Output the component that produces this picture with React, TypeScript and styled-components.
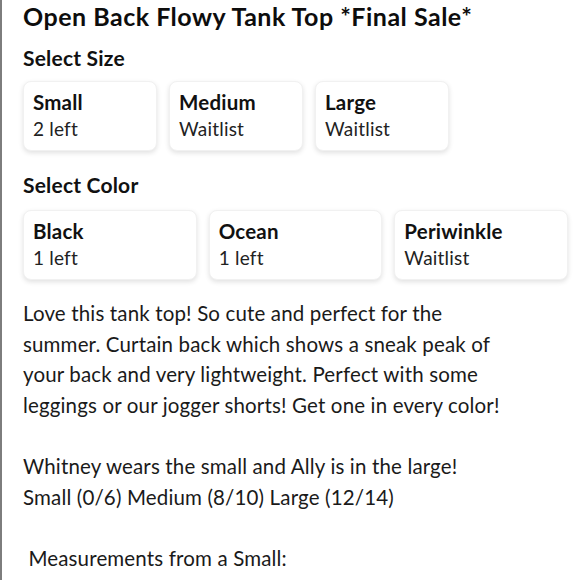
import React from "react";
import styled, { createGlobalStyle } from "styled-components";

const Global = createGlobalStyle`
  html, body { margin: 0; padding: 0; background: #ffffff; }
  body { font-family: Lato, "Open Sans", sans-serif; color: #111; }
`;

const Page = styled.div`
  box-sizing: border-box;
  min-height: 580px;
  border-left: 2px solid #7d7d7d;
  padding: 1px 12px 0 21px;
  overflow: hidden;
`;

const Title = styled.h1`
  margin: 0;
  font-size: 25px;
  line-height: 30px;
  font-weight: 700;
  color: #0d0d0d;
  letter-spacing: 0.5px;
`;

const SectionTitle = styled.h2<{ $gap: number }>`
  margin: ${(p) => p.$gap}px 0 0;
  font-size: 21px;
  line-height: 26px;
  font-weight: 700;
  color: #111;
  letter-spacing: 0.2px;
`;

const Options = styled.div<{ $top: number }>`
  display: flex;
  gap: 12px;
  margin-top: ${(p) => p.$top}px;
`;

const OptionCard = styled.div<{ $w: number }>`
  box-sizing: border-box;
  width: ${(p) => p.$w}px;
  height: 70px;
  padding: 8px 9px;
  border-radius: 8px;
  background: #fff;
  border: 1px solid #f1f1f1;
  box-shadow: 0 2px 5px rgba(0, 0, 0, 0.12);
  display: flex;
  flex-direction: column;
`;

const OptionName = styled.div`
  font-size: 20.5px;
  line-height: 25px;
  font-weight: 700;
  color: #111;
  letter-spacing: 0.2px;
`;

const OptionStatus = styled.div`
  font-size: 19px;
  line-height: 28px;
  font-weight: 400;
  color: #222;
  letter-spacing: 0.2px;
`;

const Description = styled.p`
  margin: 18px 0 0;
  font-size: 20.5px;
  line-height: 30.6px;
  color: #1a1a1a;
  letter-spacing: 0.15px;
  white-space: pre-wrap;
`;

const sizes = [
  { name: "Small", status: "2 left" },
  { name: "Medium", status: "Waitlist" },
  { name: "Large", status: "Waitlist" },
];

const colors = [
  { name: "Black", status: "1 left" },
  { name: "Ocean", status: "1 left" },
  { name: "Periwinkle", status: "Waitlist" },
];

const text =
  "Love this tank top! So cute and perfect for the\nsummer. Curtain back which shows a sneak peak of\nyour back and very lightweight. Perfect with some\nleggings or our jogger shorts! Get one in every color!\n\nWhitney wears the small and Ally is in the large!\nSmall (0/6) Medium (8/10) Large (12/14)\n\n Measurements from a Small:";

export default function App() {
  return (
    <>
      <Global />
      <Page>
        <Title>Open Back Flowy Tank Top *Final Sale*</Title>
        <SectionTitle $gap={14}>Select Size</SectionTitle>
        <Options $top={10}>
          {sizes.map((s) => (
            <OptionCard key={s.name} $w={134}>
              <OptionName>{s.name}</OptionName>
              <OptionStatus>{s.status}</OptionStatus>
            </OptionCard>
          ))}
        </Options>
        <SectionTitle $gap={21}>Select Color</SectionTitle>
        <Options $top={12}>
          {colors.map((c) => (
            <OptionCard key={c.name} $w={174}>
              <OptionName>{c.name}</OptionName>
              <OptionStatus>{c.status}</OptionStatus>
            </OptionCard>
          ))}
        </Options>
        <Description>{text}</Description>
      </Page>
    </>
  );
}
